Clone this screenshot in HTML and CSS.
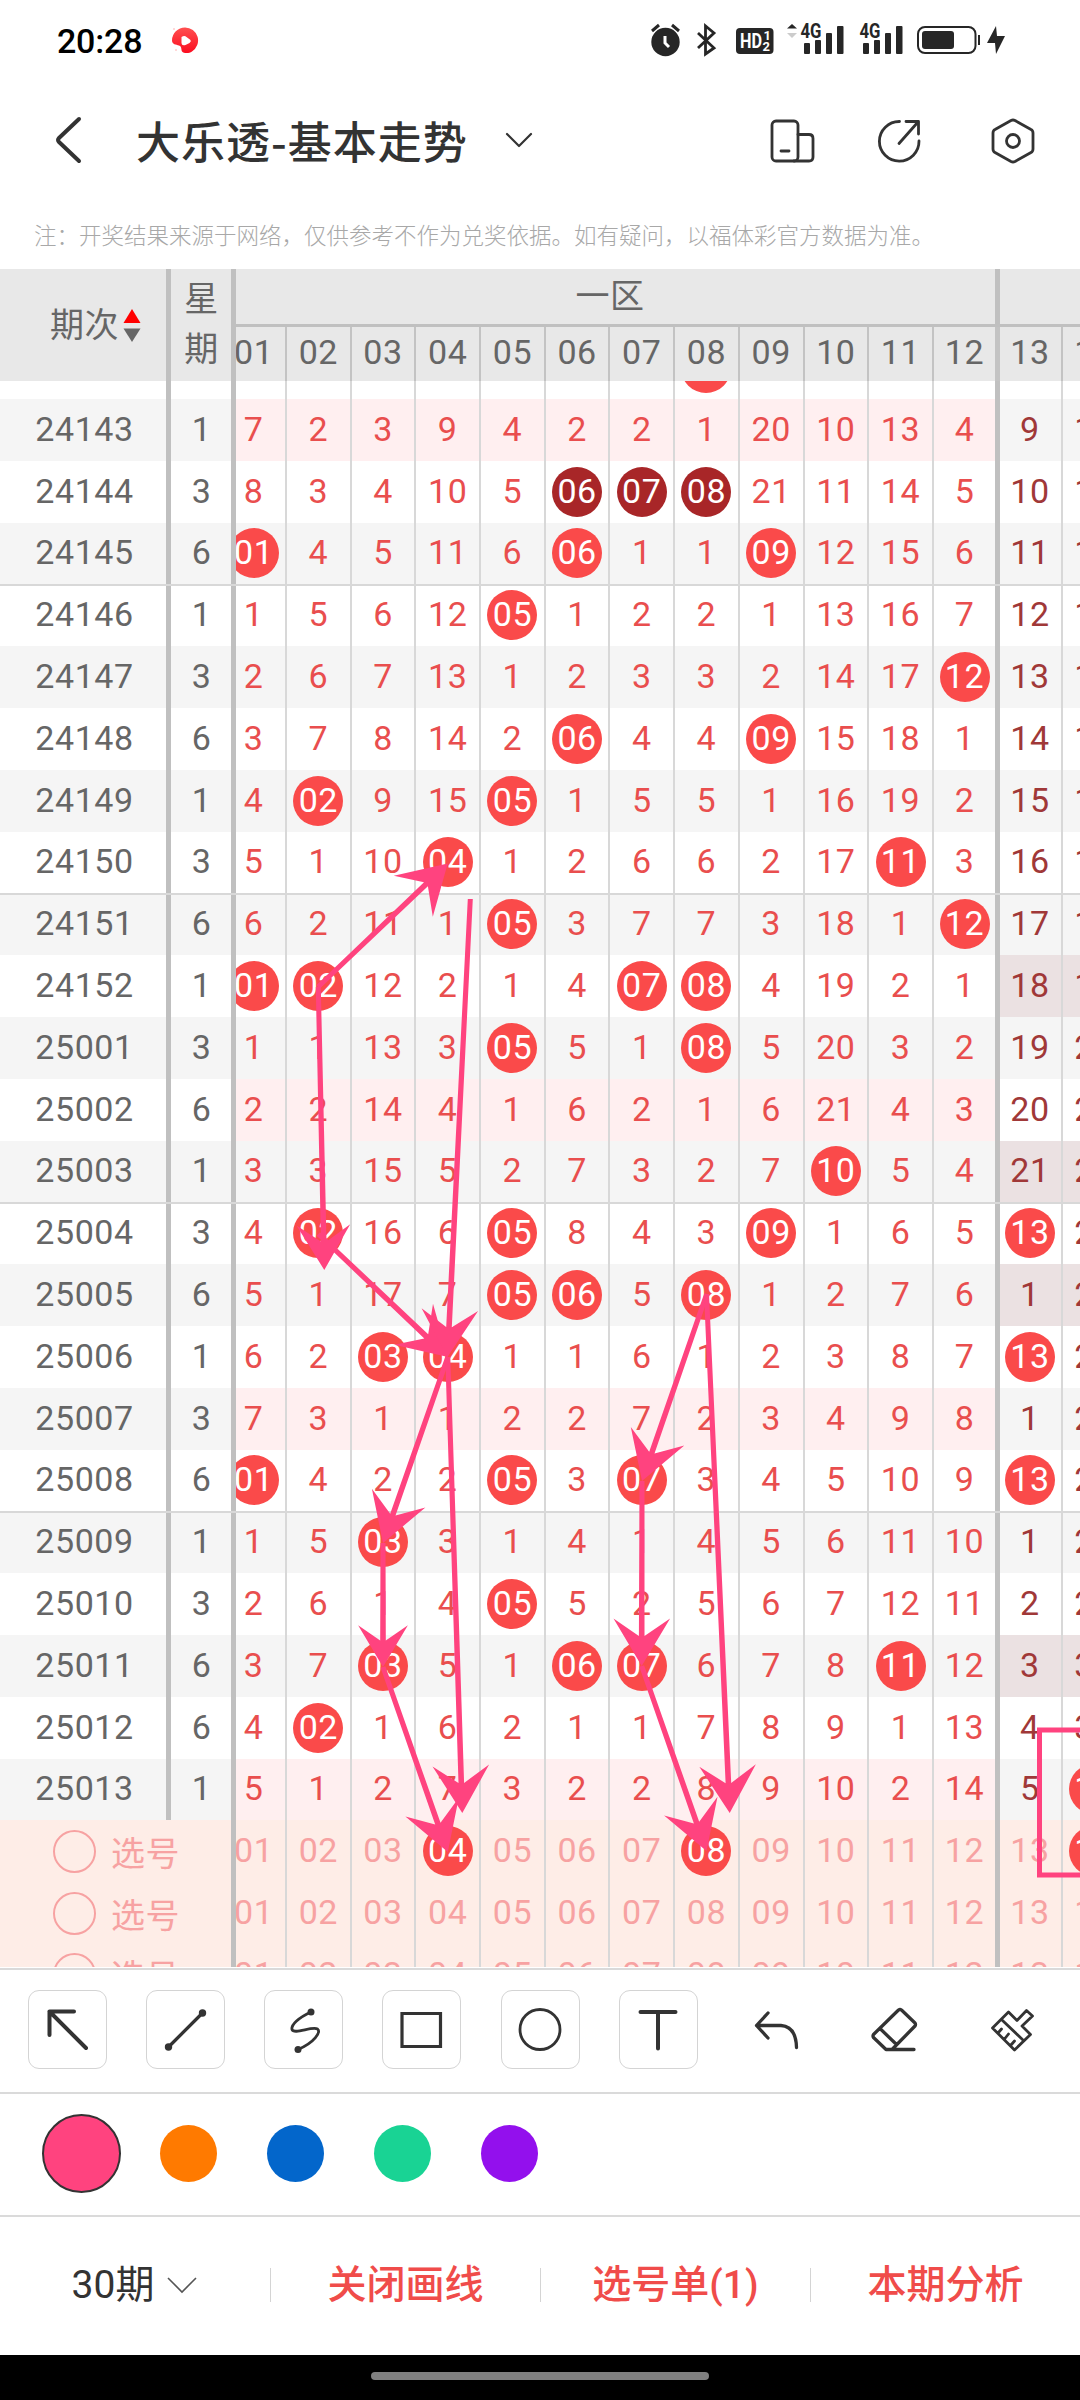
FILE: index.html
```html
<!DOCTYPE html>
<html lang="zh-CN">
  <head>
    <meta charset="UTF-8" />
    <meta name="viewport" content="width=device-width, initial-scale=1.0" />
    <title>大乐透-基本走势</title>
    <link rel="stylesheet" href="styles.css">
  </head>
  <body>
    <div class="app">
      <div class="status-bar">
        <span class="time">20:28</span>
        <svg class="rec" width="30" height="30" viewBox="0 0 30 30">
          <defs>
            <linearGradient id="rec-fill" x1="0" y1="0" x2="0" y2="1">
              <stop offset="0" stop-color="#ff5050" />
              <stop offset="1" stop-color="#fb0d20" />
            </linearGradient>
          </defs>
          <path fill="url(#rec-fill)" d="M15 1.500a13 13 0 0 1 7 24c-3 2-8 2-10 0-1-2 0-5-3-6-3-1-7-1-7-5A13 13 0 0 1 15 1.500z" />
          <path fill="#fff" d="M11.500 11q3-2 5 0l4 3q1 1.500-1 3l-4 2q-4 1-4-2z" />
          <circle cx="6" cy="24" r="1" fill="#fcc" />
          <circle cx="4" cy="3" r="1" fill="#fcc" />
        </svg>
        <svg class="indicators" width="350" height="40" viewBox="655 21 350 40">
          <g fill="#262626">
            <circle cx="665.5" cy="42" r="14.2" />
            <path d="M652 31l7-6M679 31l-7-6" stroke="#262626" stroke-width="3" />
            <path d="M665 36v7l4 4" stroke="#fff" stroke-width="3" fill="none" />
            <path d="M698 33l16 15-8.500 6V26l8.500 7-16 15" stroke="#262626" stroke-width="2.800" fill="none" />
            <rect x="736" y="28" width="37.500" height="26" rx="4" />
            <path d="M787 28.500l5-4.500 5 4.500z" />
            <path d="M787 33l5 5 5-5z" fill="#ccc" />
            <rect x="804" y="43" width="6" height="11" rx="1" />
            <rect x="815" y="40" width="6" height="14" rx="1" />
            <rect x="826" y="33" width="6" height="21" rx="1" />
            <rect x="837" y="26" width="6.500" height="28" rx="1" />
            <rect x="863" y="43" width="6" height="11" rx="1" />
            <rect x="874" y="40" width="6" height="14" rx="1" />
            <rect x="885" y="33" width="6" height="21" rx="1" />
            <rect x="896" y="26" width="6.500" height="28" rx="1" />
            <rect x="918" y="27" width="57.500" height="26" rx="7" fill="none" stroke="#262626" stroke-width="2" />
            <rect x="922" y="31" width="32" height="18" rx="3" />
            <rect x="978" y="35" width="2" height="10" />
            <path d="M996 26l-9 17h8l1 11 9-18h-8z" />
          </g>
          <g class="indicator-text">
            <text x="740" y="48" font-size="20" fill="#fff" textLength="22" lengthAdjust="spacingAndGlyphs">HD</text>
            <text x="763.500" y="40" font-size="13" fill="#fff">1</text>
            <text x="762.500" y="51" font-size="13" fill="#fff">2</text>
            <text x="800.500" y="38" font-size="20" textLength="21" lengthAdjust="spacingAndGlyphs">4G</text>
            <text x="859.500" y="38" font-size="20" textLength="21" lengthAdjust="spacingAndGlyphs">4G</text>
          </g>
        </svg>
      </div>

      <div class="nav">
        <svg class="back" width="32" height="52" viewBox="0 0 32 52">
          <path d="M26 4L6 23q-2 2 0 4l20 19" />
        </svg>
        <h1>大乐透-基本走势</h1>
        <svg class="more" width="30" height="20" viewBox="0 0 30 20">
          <path d="M3 3l12 12L27 3" />
        </svg>
        <div class="nav-icons">
          <svg width="48" height="48" viewBox="0 0 48 48">
            <rect x="4" y="4" width="26" height="40" rx="4" />
            <path d="M30 17.500h11q4 0 4 4V40q0 4-4 4H26M13 34h8" />
          </svg>
          <svg width="48" height="48" viewBox="0 0 48 48">
            <path d="M24.500 4.500a19.800 19.800 0 1 0 19.500 19.500M24 26.500L43 5M31 4.500h12.500V17" />
          </svg>
          <svg width="48" height="48" viewBox="0 0 48 48">
            <path d="M22 3.500q2-1 4 0l16 9q2 1 2 3.500v16q0 2.500-2 3.500l-16 9q-2 1-4 0l-16-9q-2-1-2-3.500V16q0-2.500 2-3.500z" />
            <circle cx="24" cy="24" r="6.500" />
          </svg>
        </div>
      </div>

      <p class="note">注：开奖结果来源于网络，仅供参考不作为兑奖依据。如有疑问，以福体彩官方数据为准。</p>

      <div class="chart">
        <div class="chart-head">
          <div class="head-issue">
            期次
            <svg width="18" height="34" viewBox="0 0 18 34">
              <path d="M9 0l8.500 14H.500z" fill="#f00" />
              <path d="M9 33L.500 19.500h17z" fill="#666" />
            </svg>
          </div>
          <div class="head-day"><span>星</span><span>期</span></div>
          <div class="head-zones">
            <div class="zone-names">
              <div class="zone-name">一区</div>
              <div class="zone-next"></div>
            </div>
            <div class="nums" id="head-nums"></div>
          </div>
        </div>
        <div class="chart-body">
          <div class="rows" id="rows"></div>
        </div>
        <svg class="drawing" id="drawing" width="1080" height="1699" viewBox="0 269 1080 1699">
          <rect x="1039.500" y="1730" width="120" height="145" />
        </svg>
      </div>

      <div class="tools">
        <div class="tool boxed">
          <svg viewBox="0 0 79 79"><path d="M58 58L21.500 21.500M46 21.500H21.500V45" /></svg>
        </div>
        <div class="tool boxed">
          <svg viewBox="0 0 79 79">
            <path class="thin" d="M22.500 57L56.500 23" />
            <circle class="dot" cx="22.500" cy="57" r="3.700" />
            <circle class="dot" cx="56.500" cy="23" r="3.700" />
          </svg>
        </div>
        <div class="tool boxed">
          <svg viewBox="0 0 79 79">
            <path class="hair" d="M47 22C34 28 27 35 28 39.500 30 45 48 36 53.500 39 57 42 51 52 34 59.500" />
            <circle class="dot" cx="47" cy="22" r="3.500" />
            <circle class="dot" cx="34" cy="59.500" r="3.500" />
          </svg>
        </div>
        <div class="tool boxed">
          <svg viewBox="0 0 79 79"><path class="sharp" d="M20 23.500h38.500v33H20z" /></svg>
        </div>
        <div class="tool boxed">
          <svg viewBox="0 0 79 79"><circle class="hair" cx="39" cy="39.500" r="20" /></svg>
        </div>
        <div class="tool boxed">
          <svg viewBox="0 0 79 79"><path d="M21.500 22h35M39 22v36.500" /></svg>
        </div>
        <div class="tool">
          <svg viewBox="0 0 79 79"><path class="thin" d="M31 23L19.500 35.500 31 48M19.500 35.500H44q15 1 15.500 22" /></svg>
        </div>
        <div class="tool">
          <svg viewBox="0 0 79 79">
            <path class="thin" d="M43.500 20q1.500-1 3 0L60 33q1 1.500 0 3L38 58.500l-1 1h-6L18.500 47.500q-1-1.500 0-3zM25.500 39L41 54M31 59.500h28" />
          </svg>
        </div>
        <div class="tool">
          <svg viewBox="0 0 79 79">
            <path class="hair" d="M35.500 22l8.500 8.500L53.500 20.500l6 5.500-10.500 10 8.500 8.500-16 15.500L19.500 38zM29 30l21.500 20.500M25 43l3.500-4M31.500 49l4-5M38 55l3.500-4" />
          </svg>
        </div>
      </div>

      <div class="colors">
        <div class="color"><span class="swatch pink"></span></div>
        <div class="color"><span class="swatch orange"></span></div>
        <div class="color"><span class="swatch blue"></span></div>
        <div class="color"><span class="swatch green"></span></div>
        <div class="color"><span class="swatch purple"></span></div>
      </div>

      <div class="footer">
        <div class="footer-item period">
          30期
          <svg width="32" height="18" viewBox="0 0 32 18"><path d="M2 2l14 14L30 2" /></svg>
        </div>
        <div class="footer-item">关闭画线</div>
        <div class="footer-item">选号单(1)</div>
        <div class="footer-item">本期分析</div>
      </div>

      <div class="home-bar"><span></span></div>
    </div>

    <script>
      // issue, weekday, numbers 01-14 (b = drawn ball, d = dark ball), row flag
      const data = [
        ["", "", "- - - - - - - b - - - - - -", ""],
        ["24143", "1", "7 2 3 9 4 2 2 1 20 10 13 4 9 10", "pink"],
        ["24144", "3", "8 3 4 10 5 d6 d7 d8 21 11 14 5 10 11", ""],
        ["24145", "6", "b1 4 5 11 6 b6 1 1 b9 12 15 6 11 12", ""],
        ["24146", "1", "1 5 6 12 b5 1 2 2 1 13 16 7 12 13", "line"],
        ["24147", "3", "2 6 7 13 1 2 3 3 2 14 17 b12 13 14", ""],
        ["24148", "6", "3 7 8 14 2 b6 4 4 b9 15 18 1 14 15", ""],
        ["24149", "1", "4 b2 9 15 b5 1 5 5 1 16 19 2 15 16", ""],
        ["24150", "3", "5 1 10 b4 1 2 6 6 2 17 b11 3 16 17", ""],
        ["24151", "6", "6 2 11 1 b5 3 7 7 3 18 1 b12 17 18", "line"],
        ["24152", "1", "b1 b2 12 2 1 4 b7 b8 4 19 2 1 18 19", "dark"],
        ["25001", "3", "1 1 13 3 b5 5 1 b8 5 20 3 2 19 20", ""],
        ["25002", "6", "2 2 14 4 1 6 2 1 6 21 4 3 20 21", "pink"],
        ["25003", "1", "3 3 15 5 2 7 3 2 7 b10 5 4 21 22", "dark"],
        ["25004", "3", "4 b2 16 6 b5 8 4 3 b9 1 6 5 b13 23", "line"],
        ["25005", "6", "5 1 17 7 b5 b6 5 b8 1 2 7 6 1 24", "dark"],
        ["25006", "1", "6 2 b3 b4 1 1 6 1 2 3 8 7 b13 25", ""],
        ["25007", "3", "7 3 1 1 2 2 7 2 3 4 9 8 1 26", "pink"],
        ["25008", "6", "b1 4 2 2 b5 3 b7 3 4 5 10 9 b13 27", ""],
        ["25009", "1", "1 5 b3 3 1 4 1 4 5 6 11 10 1 28", "line"],
        ["25010", "3", "2 6 1 4 b5 5 2 5 6 7 12 11 2 29", ""],
        ["25011", "6", "3 7 b3 5 1 b6 b7 6 7 8 b11 12 3 30", "dark"],
        ["25012", "6", "4 b2 1 6 2 1 1 7 8 9 1 13 4 31", ""],
        ["25013", "1", "5 1 2 7 3 2 2 8 9 10 2 14 5 b14", "pink"]
      ];
      const picks = [[4, 8, 14], [], []];

      const pad = n => String(n).padStart(2, "0");

      const cell = value => {
        if (value === "-") return `<div class="num"></div>`;
        if (value === "b") return `<div class="num"><span class="ball"></span></div>`;
        if (value[0] === "b") return `<div class="num"><span class="ball">${pad(value.slice(1))}</span></div>`;
        if (value[0] === "d") return `<div class="num"><span class="ball dark-ball">${pad(value.slice(1))}</span></div>`;
        return `<div class="num">${value}</div>`;
      };

      const labels = Array.from({ length: 14 }, (_, i) => pad(i + 1));
      document.getElementById("head-nums").innerHTML = labels.map(cell).join("");

      let html = "";
      data.forEach(([issue, day, nums, flag]) => {
        html += `<div class="row ${flag}">
          <div class="issue">${issue}</div>
          <div class="day">${day}</div>
          <div class="nums">${nums.split(" ").map(cell).join("")}</div>
        </div>`;
      });
      picks.forEach(chosen => {
        const nums = labels.map((n, i) => cell(chosen.includes(i + 1) ? "b" + n : n)).join("");
        html += `<div class="row pick">
          <div class="pick-label"><span class="radio"></span>选号</div>
          <div class="nums">${nums}</div>
        </div>`;
      });
      document.getElementById("rows").innerHTML = html;

      // hand drawn arrows: x1, y1, x2, y2, head size
      const arrows = [
        [318, 987, 447.7, 863.5, 1],
        [318.3, 987, 324.3, 1270, 0.95],
        [318.3, 1234, 448, 1357, 1],
        [470.3, 899, 447.5, 1357, 1],
        [447.8, 1357, 383, 1543, 1],
        [383, 1543, 383, 1667, 0.88],
        [383, 1667, 447.8, 1852, 1],
        [447.8, 1357, 462.3, 1813, 1],
        [706.7, 1294, 642, 1481, 1],
        [642, 1481, 641.7, 1666, 1],
        [641.7, 1666, 706.5, 1851, 1],
        [706.5, 1294, 729.7, 1813, 1]
      ];

      const arrowPoints = ([x1, y1, x2, y2, size]) => {
        const len = Math.hypot(x2 - x1, y2 - y1);
        const ux = (x2 - x1) / len;
        const uy = (y2 - y1) / len;
        const at = (back, side) =>
          `${(x2 - ux * back - uy * side).toFixed(1)},${(y2 - uy * back + ux * side).toFixed(1)}`;
        return [
          at(0, 0), at(47.5 * size, 28.3 * size), at(30 * size, 2.8), at(len, 2.5),
          at(len, -2.5), at(30 * size, -2.8), at(47.5 * size, -28.3 * size)
        ].join(" ");
      };

      document.getElementById("drawing").innerHTML +=
        arrows.map(a => `<polygon points="${arrowPoints(a)}" />`).join("");
    </script>
  </body>
</html>
```
FILE: styles.css
```css
* {
  box-sizing: border-box;
}

body {
  margin: 0;
  background-color: #fff;
  font-family: Roboto, "Noto Sans CJK SC", sans-serif;
  color: #333;
}

svg {
  display: block;
  flex: none;
}

.app {
  display: flex;
  flex-direction: column;
  width: 1080px;
  height: 2400px;
  overflow: hidden;
}

.status-bar {
  display: flex;
  align-items: center;
  height: 82px;
  padding: 0 75px 0 57px;
}

.time {
  font-size: 34px;
  font-weight: 500;
  letter-spacing: -0.2px;
  color: #000;
}

.rec {
  margin-left: 28px;
}

.indicators {
  margin-left: auto;
  overflow: visible;
}

.indicator-text {
  font-weight: 700;
  fill: #262626;
}

.nav {
  display: flex;
  align-items: center;
  height: 118px;
  padding: 0 43px 0 53px;
}

.nav svg {
  fill: none;
  stroke: #333;
  stroke-width: 2.8;
  stroke-linecap: round;
  stroke-linejoin: round;
}

.nav .back {
  stroke-width: 4;
}

.nav h1 {
  margin: 0 0 2px 51px;
  font-family: "Noto Sans CJK SC", sans-serif;
  font-size: 44px;
  font-weight: 500;
  letter-spacing: 1px;
  line-height: 60px;
}

.nav .more {
  margin-left: 36px;
  stroke-width: 2.2;
}

.nav-icons {
  display: flex;
  gap: 63px;
  margin-left: auto;
}

.nav-icons svg:nth-child(2) {
  margin: 0 3px -2px -4px;
}

.note {
  height: 69px;
  margin: 0;
  padding-left: 34px;
  font-family: "Noto Sans CJK SC", sans-serif;
  font-size: 22.5px;
  font-weight: 300;
  line-height: 69px;
  color: #a8a8a8;
  white-space: nowrap;
}

.chart {
  position: relative;
  height: 1699px;
  overflow: hidden;
  font-size: 34px;
  letter-spacing: 0.6px;
  color: #666;
}

.chart-head {
  display: flex;
  height: 112px;
  background-color: #e8e8e8;
}

.head-issue {
  display: flex;
  align-items: center;
  gap: 4px;
  width: 171px;
  padding: 0 0 5px 50px;
  border-right: 5px solid #c0c0c0;
}

.head-issue svg {
  margin-top: 6px;
}

.head-day {
  display: flex;
  flex-direction: column;
  width: 65px;
  padding: 5px 0 0 1px;
  border-right: 5px solid #c0c0c0;
  line-height: 50px;
  text-align: center;
}

.head-zones {
  width: 844px;
}

.zone-names {
  display: flex;
  height: 58px;
  border-bottom: 3px solid #c0c0c0;
}

.zone-name {
  width: 764px;
  padding-right: 11px;
  border-right: 5px solid #c0c0c0;
  line-height: 54px;
  text-align: center;
}

.nums {
  display: flex;
  width: 844px;
  overflow: hidden;
}

.num {
  display: flex;
  flex: none;
  align-items: center;
  justify-content: center;
  width: 64.7px;
  padding-bottom: 2px;
  border-right: 2px solid #d8d8d8;
  color: #e94e4e;
}

.num:first-child {
  margin-left: -13.7px;
}

.num:nth-child(12) {
  width: 66.4px;
  border-right: 5px solid #c0c0c0;
}

.num:nth-child(13) {
  width: 62.4px;
  padding-right: 1px;
}

.num:nth-child(n + 13) {
  color: #a03838;
}

.chart-head .nums {
  height: 54px;
}

.chart-head .num {
  padding-bottom: 5px;
  border-color: #c3c3c3;
  color: #666;
}

/* the list is scrolled, its first row is mostly under the header */
.chart-body {
  height: 1586px;
  overflow: hidden;
}

.rows {
  margin-top: -43.8px;
}

.row {
  display: flex;
  height: 61.8px;
  background-color: #fff;
}

.row:nth-child(even) {
  background-color: #f5f5f5;
}

.row.line {
  border-top: 2px solid #d8d8d8;
}

.row.line .num,
.row.line .issue,
.row.line .day {
  padding-bottom: 4px;
}

.row.pink .num:nth-child(-n + 12) {
  background-color: #ffeff0;
}

.row.dark .num:nth-child(n + 13) {
  background-color: #ebe1e2;
}

.issue,
.day {
  display: flex;
  align-items: center;
  justify-content: center;
  padding-bottom: 2px;
  border-right: 5px solid #c0c0c0;
}

.issue {
  width: 171px;
  padding-left: 3px;
}

.day {
  width: 65px;
  padding-left: 1px;
}

.ball {
  display: flex;
  flex: none;
  align-items: center;
  justify-content: center;
  width: 50px;
  height: 50px;
  margin-bottom: -2px;
  padding-bottom: 2px;
  border-radius: 50%;
  background-color: #fa4a4a;
  color: #fff;
}

.dark-ball {
  background-color: #a82628;
}

.row.pick {
  background-color: #feede7;
}

.pick .num {
  color: #f7a2a2;
}

.pick-label {
  display: flex;
  align-items: center;
  gap: 15px;
  width: 236px;
  padding-left: 53px;
  border-right: 5px solid #c0c0c0;
  color: #f7a2a2;
}

.radio {
  width: 43px;
  height: 43px;
  border: 2.5px solid #f7a2a2;
  border-radius: 50%;
}

.drawing {
  position: absolute;
  top: 0;
  left: 0;
  fill: #ff437f;
}

.drawing rect {
  fill: none;
  stroke: #ff437f;
  stroke-width: 5;
}

.tools {
  display: flex;
  justify-content: space-between;
  height: 124px;
  padding: 20px 28px 0;
  border-top: 2px solid #dadada;
}

.tool {
  width: 79px;
  height: 79px;
}

.tool.boxed {
  border: 1px solid #d4d4d4;
  border-radius: 11px;
}

.tool svg {
  width: 79px;
  height: 79px;
  fill: none;
  stroke: #333;
  stroke-width: 4;
  stroke-linecap: round;
  stroke-linejoin: round;
}

.tool.boxed svg {
  margin: -1px;
}

.tool .thin {
  stroke-width: 3.3;
}

.tool .hair {
  stroke-width: 2.8;
}

.tool .sharp {
  stroke-width: 3.2;
  stroke-linejoin: miter;
}

.tool .dot {
  fill: #333;
  stroke: none;
}

.colors {
  display: flex;
  gap: 28px;
  height: 123px;
  padding: 20px 42px 0;
  border-top: 2px solid #dadada;
}

.color {
  display: flex;
  align-items: center;
  justify-content: center;
  width: 79px;
  height: 79px;
}

.swatch {
  width: 57px;
  height: 57px;
  border-radius: 50%;
}

.swatch.pink {
  width: 79px;
  height: 79px;
  border: 2px solid #333;
  background-color: #ff437f;
}

.swatch.orange {
  background-color: #ff7a00;
}

.swatch.blue {
  background-color: #0366cb;
}

.swatch.green {
  background-color: #19d394;
}

.swatch.purple {
  background-color: #9310ed;
}

.footer {
  display: flex;
  align-items: center;
  height: 140px;
  padding-bottom: 2px;
  border-top: 2px solid #dadada;
}

.footer-item {
  display: flex;
  align-items: center;
  justify-content: center;
  width: 270px;
  height: 34px;
  border-left: 1px solid #d4d4d4;
  font-size: 39px;
  font-weight: 500;
  color: #f04c4a;
  line-height: 34px;
}

.footer-item.period {
  gap: 12px;
  border-left: none;
  font-weight: 400;
  color: #333;
}

.period svg {
  fill: none;
  stroke: #555;
  stroke-width: 1.6;
}

.home-bar {
  display: flex;
  justify-content: center;
  height: 45px;
  padding-top: 17px;
  background-color: #000;
}

.home-bar span {
  width: 338px;
  height: 8px;
  border-radius: 4px;
  background-color: #808080;
}
```
